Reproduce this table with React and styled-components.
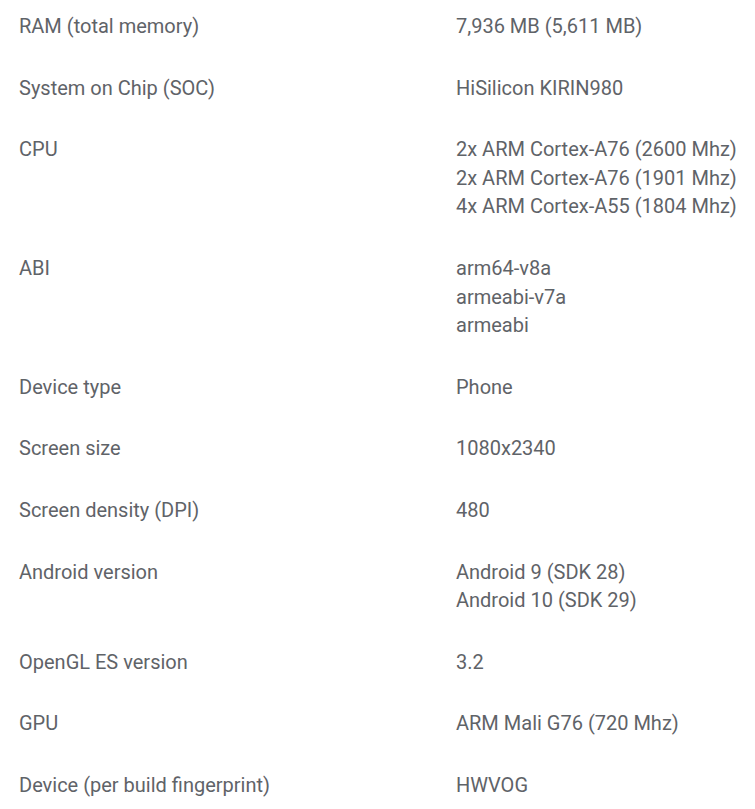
import React from "react";
import styled, { createGlobalStyle } from "styled-components";

const GlobalStyle = createGlobalStyle`
    body {
        margin: 0;
        background: #ffffff;
        font-family: Roboto, "Noto Sans", Arial, sans-serif;
    }
`;

const SpecList = styled.div`
    display: flex;
    flex-direction: column;
    gap: 33px;
    padding: 12px 0 30px 19px;
`;

const SpecRow = styled.div`
    display: grid;
    grid-template-columns: 437px 1fr;
    font-size: 20px;
    line-height: 28.6px;
    color: #5f6368;
`;

const Label = styled.div``;

const Values = styled.div`
    display: flex;
    flex-direction: column;
`;

const specs = [
    { label: "RAM (total memory)", values: ["7,936 MB (5,611 MB)"] },
    { label: "System on Chip (SOC)", values: ["HiSilicon KIRIN980"] },
    {
        label: "CPU",
        values: [
            "2x ARM Cortex-A76 (2600 Mhz)",
            "2x ARM Cortex-A76 (1901 Mhz)",
            "4x ARM Cortex-A55 (1804 Mhz)",
        ],
    },
    { label: "ABI", values: ["arm64-v8a", "armeabi-v7a", "armeabi"] },
    { label: "Device type", values: ["Phone"] },
    { label: "Screen size", values: ["1080x2340"] },
    { label: "Screen density (DPI)", values: ["480"] },
    { label: "Android version", values: ["Android 9 (SDK 28)", "Android 10 (SDK 29)"] },
    { label: "OpenGL ES version", values: ["3.2"] },
    { label: "GPU", values: ["ARM Mali G76 (720 Mhz)"] },
    { label: "Device (per build fingerprint)", values: ["HWVOG"] },
];

export default function App() {
    return (
        <>
            <GlobalStyle />
            <SpecList>
                {specs.map((spec) => (
                    <SpecRow key={spec.label}>
                        <Label>{spec.label}</Label>
                        <Values>
                            {spec.values.map((v) => (
                                <span key={v}>{v}</span>
                            ))}
                        </Values>
                    </SpecRow>
                ))}
            </SpecList>
        </>
    );
}
